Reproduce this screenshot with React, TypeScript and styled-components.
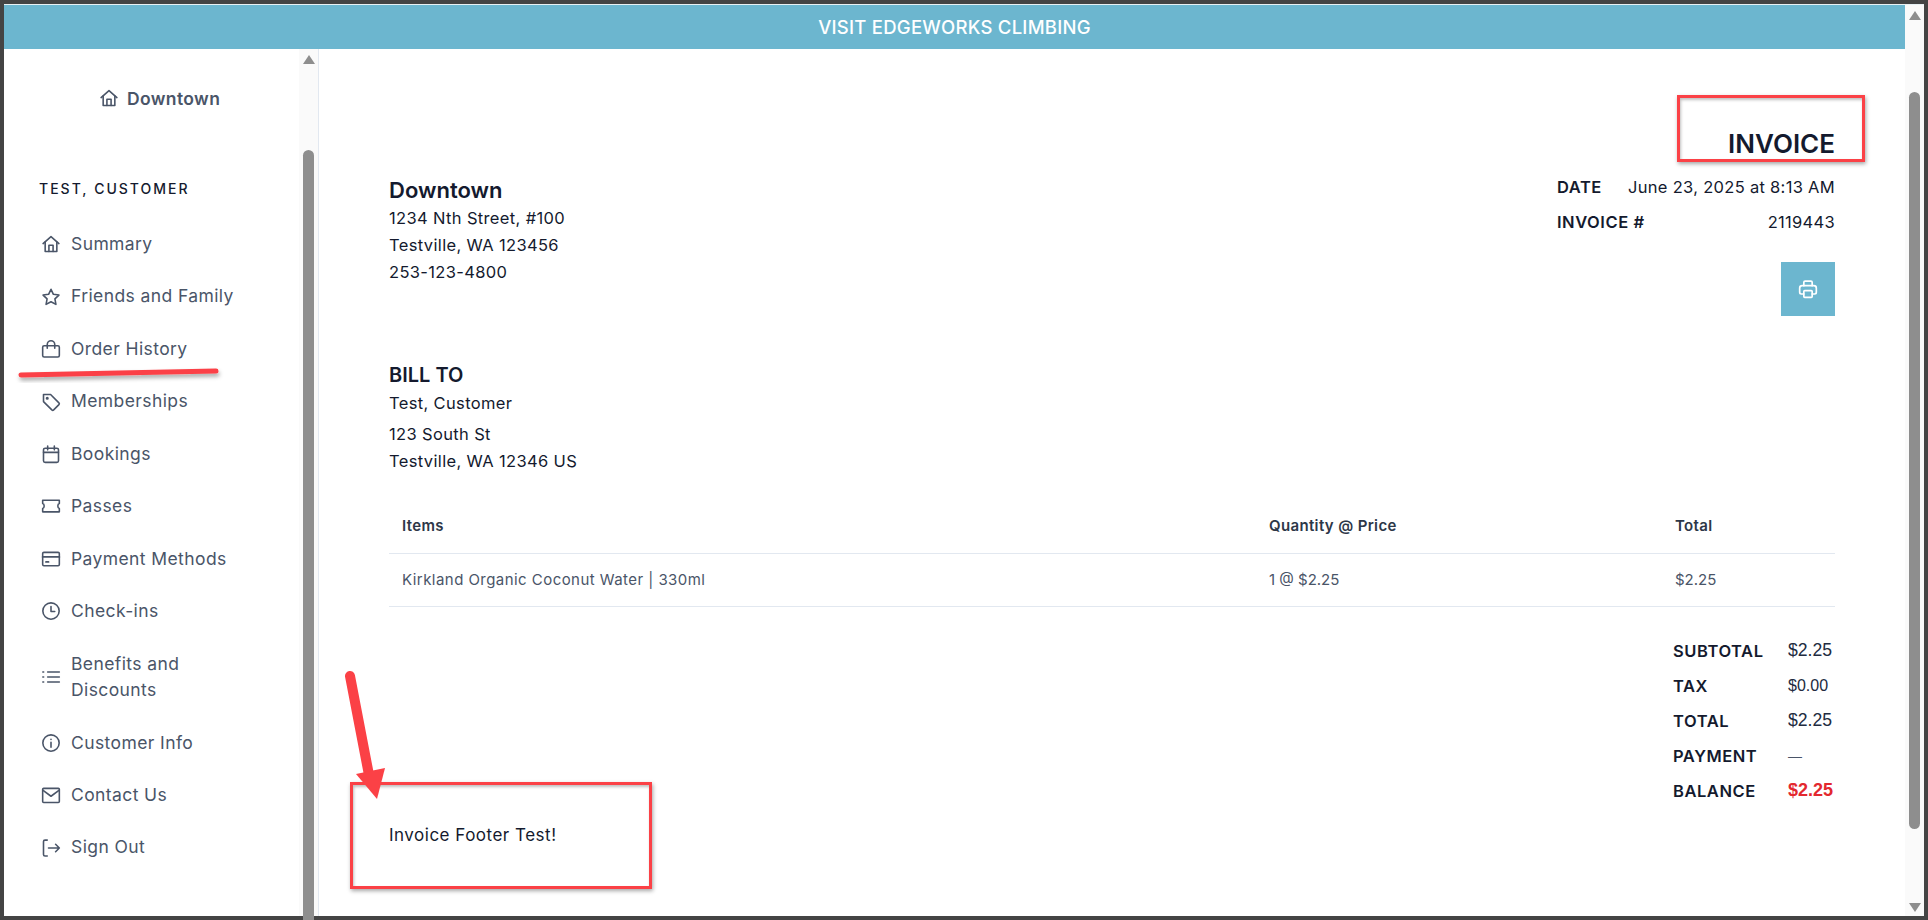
import React, { FC } from 'react'
import styled, { createGlobalStyle } from 'styled-components'

const BRAND = '#6cb6cf'
const INK = '#141a2e'
const SLATE = '#4a5568'
const RULE = '#e2e8f0'
const MARK = '#fb4146'
const FONT = `Inter, "Noto Sans", sans-serif`

const GlobalStyle = createGlobalStyle`
  html, body {
    margin: 0;
    padding: 0;
    background: #444;
    font-family: ${FONT};
  }
  * {
    box-sizing: border-box;
  }
`

const Page = styled.div`
  position: relative;
  width: 1928px;
  height: 920px;
  padding: 4px;
  overflow: hidden;
  background: #444;
`

const Window = styled.div`
  display: flex;
  height: 912px;
  border-top: 1px solid #e8f1f4;
  background: #fff;
`

const Content = styled.div`
  display: flex;
  flex: 1;
  flex-direction: column;
  min-width: 0;
`

const Banner = styled.div`
  display: flex;
  align-items: center;
  justify-content: center;
  height: 44px;
  color: #fff;
  background: ${BRAND};
  font-size: 18.5px;
  font-weight: 500;
  letter-spacing: 0.25px;
`

const Body = styled.div`
  display: flex;
  flex: 1;
  min-height: 0;
`

const Sidebar = styled.aside`
  display: flex;
  width: 315px;
  flex: none;
  border-right: 1px solid ${RULE};
`

const SideInner = styled.div`
  flex: 1;
  padding: 34px 0 0 37px;
  min-width: 0;
`

const Location = styled.div`
  display: flex;
  align-items: center;
  gap: 8px;
  height: 30px;
  padding-left: 58px;
  color: ${SLATE};
  font-size: 17.5px;
  font-weight: 600;
  letter-spacing: 0.38px;
`

const CustomerName = styled.div`
  margin: 63px 0 16px -2px;
  color: ${INK};
  font-size: 14px;
  font-weight: 500;
  line-height: 26px;
  letter-spacing: 2px;
`

const Nav = styled.nav`
  display: flex;
  flex-direction: column;
`

const NavItem = styled.a`
  display: flex;
  align-items: center;
  gap: 10px;
  padding: 13px 0;
  width: 215px;
  color: ${SLATE};
  font-size: 17.5px;
  line-height: 26.45px;
  letter-spacing: 0.4px;
`

const NavIcon = styled.svg`
  flex: none;
  width: 20px;
  height: 20px;
  fill: none;
  stroke: currentColor;
  stroke-width: 1.9;
  stroke-linecap: round;
  stroke-linejoin: round;
`

const ScrollTrack = styled.div`
  display: flex;
  flex: none;
  flex-direction: column;
  align-items: center;
  width: 19px;
  padding-top: 6px;
  background: #fafafa;
`

const ArrowUp = styled.div`
  flex: none;
  width: 0;
  height: 0;
  border-left: 6.5px solid transparent;
  border-right: 6.5px solid transparent;
  border-bottom: 9px solid #8e8e8e;
`

const ArrowDown = styled(ArrowUp)`
  margin-top: auto;
  margin-bottom: 4px;
  border-bottom: 0;
  border-top: 9px solid #8e8e8e;
`

const Thumb = styled.div<{ $top: number; $height: number }>`
  flex: none;
  width: 11px;
  height: ${p => p.$height}px;
  margin-top: ${p => p.$top}px;
  border-radius: 5.5px;
  background: #8e8e8e;
`

const SideThumb = styled(Thumb)`
  border-radius: 5.5px 5.5px 0 0;
`

const Main = styled.main`
  flex: 1;
  min-width: 0;
  padding: 80px 70px 0;
`

const InvoiceTitle = styled.h1`
  margin: 0;
  color: ${INK};
  font-size: 26px;
  font-weight: 600;
  line-height: 30px;
  text-align: right;
`

const HeadRow = styled.div`
  display: flex;
  justify-content: space-between;
`

const Parties = styled.div`
  padding-top: 16px;
`

const PartyName = styled.h2<{ $gap?: number; $size: number }>`
  margin: ${p => p.$gap ?? 0}px 0 0;
  color: ${INK};
  font-size: ${p => p.$size}px;
  font-weight: 600;
  line-height: 30px;
`

const AddressLine = styled.div<{ $gap?: number }>`
  margin-top: ${p => p.$gap ?? 0}px;
  color: ${INK};
  font-size: 16.5px;
  line-height: 27px;
  letter-spacing: 0.35px;
`

const Meta = styled.div`
  display: flex;
  flex-direction: column;
  width: 278px;
  padding-top: 10px;
`

const MetaRow = styled.div`
  display: flex;
  align-items: center;
  justify-content: space-between;
  height: 35px;
  color: ${INK};
  font-size: 16.5px;
  letter-spacing: 0.3px;
`

const Label = styled.span`
  color: ${INK};
  font-size: 16.5px;
  font-weight: 600;
  letter-spacing: 0.55px;
`

const PrintButton = styled.button`
  display: flex;
  align-items: center;
  justify-content: center;
  align-self: flex-end;
  width: 54px;
  height: 54px;
  margin-top: 23px;
  padding: 0;
  border: 0;
  color: #fff;
  background: ${BRAND};
`

const PrintIcon = styled(NavIcon)`
  stroke-width: 2;
`

const ItemsTable = styled.div`
  margin-top: 22px;
`

const TableRow = styled.div<{ $height: number }>`
  display: grid;
  grid-template-columns: 867px 406px 173px;
  align-items: center;
  height: ${p => p.$height}px;
  border-bottom: 1px solid ${RULE};
`

const HeadCell = styled.div`
  padding-left: 13px;
  color: #2d3748;
  font-size: 15px;
  font-weight: 600;
  letter-spacing: 0.35px;
`

const BodyCell = styled.div<{ $tight?: boolean }>`
  padding: 0 0 1px 13px;
  color: ${SLATE};
  font-size: 15px;
  letter-spacing: ${p => (p.$tight ? 0 : 0.45)}px;
`

const Totals = styled.div`
  display: flex;
  flex-direction: column;
  align-items: flex-end;
  margin-top: 26px;
`

const TotalRow = styled.div`
  display: grid;
  grid-template-columns: 115px 47px;
  align-items: center;
  height: 35px;
`

const TotalValue = styled.span<{ $size?: number; $alert?: boolean; $muted?: boolean }>`
  color: ${p => (p.$alert ? '#e3282f' : p.$muted ? SLATE : '#222b40')};
  font-family: "Liberation Sans", Arial, sans-serif;
  font-size: ${p => p.$size ?? 17.6}px;
  font-weight: ${p => (p.$alert ? 700 : 400)};
  white-space: nowrap;
`

const FooterNote = styled.div`
  margin-top: 14px;
  color: ${INK};
  font-size: 17px;
  line-height: 27px;
  letter-spacing: 0.5px;
`

const Callout = styled.div<{ $x: number; $y: number; $w: number; $h: number }>`
  position: absolute;
  left: ${p => p.$x}px;
  top: ${p => p.$y}px;
  width: ${p => p.$w}px;
  height: ${p => p.$h}px;
  border: 3px solid ${MARK};
  box-shadow: 1px 2px 4px rgba(0, 0, 0, 0.35), inset 1px 2px 3px rgba(0, 0, 0, 0.25);
  pointer-events: none;
`

const Overlay = styled.svg`
  position: absolute;
  left: 0;
  top: 0;
  width: 1928px;
  height: 920px;
  pointer-events: none;
`

const icons: Record<string, React.ReactNode> = {
  home: (
    <>
      <path d="M2.5 11.5 12 3.2l9.5 8.3" />
      <path d="M5 9.5V21h14V9.5" />
      <path d="M9.5 21v-7.5h5V21" />
    </>
  ),
  star: <path d="m12 2.8 2.9 6 6.6.9-4.8 4.6 1.2 6.6-5.9-3.2-5.9 3.2 1.2-6.6-4.8-4.6 6.6-.9z" />,
  bag: (
    <>
      <rect x="2" y="8" width="20" height="13.5" rx="1.8" />
      <path d="M7.5 11V6.5a4.5 4.5 0 0 1 9 0V11" />
    </>
  ),
  tag: (
    <>
      <path d="M3 3h8.5l10 10a1.6 1.6 0 0 1 0 2.2l-6.3 6.3a1.6 1.6 0 0 1-2.2 0L3 11.5z" />
      <circle cx="7.5" cy="7.5" r=".9" />
    </>
  ),
  calendar: (
    <>
      <rect x="3" y="5" width="18" height="17" rx="2" />
      <path d="M3 10h18M8 2.5V7M16 2.5V7" />
    </>
  ),
  ticket: <path d="M2 5h20v4c-2.4.6-2.4 5.4 0 6v4H2v-4c2.4-.6 2.4-5.4 0-6z" />,
  card: (
    <>
      <rect x="2" y="4" width="20" height="16" rx="1.5" />
      <path d="M2 9.5h20M6 15.5h3" strokeWidth="2.2" />
    </>
  ),
  clock: (
    <>
      <circle cx="12" cy="12" r="9.8" />
      <path d="M12 6.5V12.5h4.5" />
    </>
  ),
  list: <path d="M8 6h14M8 12h14M8 18h14M2.2 6h1M2.2 12h1M2.2 18h1" />,
  info: (
    <>
      <circle cx="12" cy="12" r="9.8" />
      <path d="M12 11v6M12 7.4v.4" />
    </>
  ),
  mail: (
    <>
      <rect x="2" y="4" width="20" height="17" rx="1.2" />
      <path d="m2.5 6.5 9.5 7 9.5-7" />
    </>
  ),
  signout: (
    <>
      <path d="M7.5 2.5H4.8A1.8 1.8 0 0 0 3 4.3v15.4a1.8 1.8 0 0 0 1.8 1.8h2.700" />
      <path d="M9 12h13M17.5 7.5 22 12l-4.5 4.5" />
    </>
  ),
}

const Icon: FC<{ name: string }> = ({ name }) => (
  <NavIcon viewBox="0 0 24 24">{icons[name]}</NavIcon>
)

const navItems = [
  { icon: 'home', label: 'Summary' },
  { icon: 'star', label: 'Friends and Family' },
  { icon: 'bag', label: 'Order History' },
  { icon: 'tag', label: 'Memberships' },
  { icon: 'calendar', label: 'Bookings' },
  { icon: 'ticket', label: 'Passes' },
  { icon: 'card', label: 'Payment Methods' },
  { icon: 'clock', label: 'Check-ins' },
  { icon: 'list', label: 'Benefits and Discounts' },
  { icon: 'info', label: 'Customer Info' },
  { icon: 'mail', label: 'Contact Us' },
  { icon: 'signout', label: 'Sign Out' },
]

const App: FC = () => {
  return (
    <Page>
      <GlobalStyle />
      <Window>
        <Content>
          <Banner>VISIT EDGEWORKS CLIMBING</Banner>
          <Body>
            <Sidebar>
              <SideInner>
                <Location>
                  <Icon name="home" />
                  Downtown
                </Location>
                <CustomerName>TEST, CUSTOMER</CustomerName>
                <Nav>
                  {navItems.map(item => (
                    <NavItem key={item.label}>
                      <Icon name={item.icon} />
                      <span>{item.label}</span>
                    </NavItem>
                  ))}
                </Nav>
              </SideInner>
              <ScrollTrack>
                <ArrowUp />
                <SideThumb $top={86} $height={780} />
              </ScrollTrack>
            </Sidebar>
            <Main>
              <InvoiceTitle>INVOICE</InvoiceTitle>
              <HeadRow>
                <Parties>
                  <PartyName $size={22}>Downtown</PartyName>
                  <AddressLine>1234 Nth Street, #100</AddressLine>
                  <AddressLine>Testville, WA 123456</AddressLine>
                  <AddressLine>253-123-4800</AddressLine>
                  <PartyName $size={20} $gap={74}>BILL TO</PartyName>
                  <AddressLine>Test, Customer</AddressLine>
                  <AddressLine $gap={4}>123 South St</AddressLine>
                  <AddressLine>Testville, WA 12346 US</AddressLine>
                </Parties>
                <Meta>
                  <MetaRow>
                    <Label>DATE</Label>
                    <span>June 23, 2025 at 8:13 AM</span>
                  </MetaRow>
                  <MetaRow>
                    <Label>INVOICE #</Label>
                    <span>2119443</span>
                  </MetaRow>
                  <PrintButton aria-label="Print">
                    <PrintIcon viewBox="0 0 24 24">
                      <path d="M7 8V4a1.5 1.5 0 0 1 1.5-1.5h7A1.5 1.5 0 0 1 17 4v4" />
                      <path d="M7 18H4a2 2 0 0 1-2-2v-5a3 3 0 0 1 3-3h14a3 3 0 0 1 3 3v5a2 2 0 0 1-2 2h-3" />
                      <rect x="7" y="14" width="10" height="8" rx="1" />
                    </PrintIcon>
                  </PrintButton>
                </Meta>
              </HeadRow>
              <ItemsTable>
                <TableRow $height={57}>
                  <HeadCell>Items</HeadCell>
                  <HeadCell>Quantity @ Price</HeadCell>
                  <HeadCell>Total</HeadCell>
                </TableRow>
                <TableRow $height={53}>
                  <BodyCell>Kirkland Organic Coconut Water | 330ml</BodyCell>
                  <BodyCell $tight>1 @ $2.25</BodyCell>
                  <BodyCell $tight>$2.25</BodyCell>
                </TableRow>
              </ItemsTable>
              <Totals>
                <TotalRow>
                  <Label>SUBTOTAL</Label>
                  <TotalValue>$2.25</TotalValue>
                </TotalRow>
                <TotalRow>
                  <Label>TAX</Label>
                  <TotalValue $size={16}>$0.00</TotalValue>
                </TotalRow>
                <TotalRow>
                  <Label>TOTAL</Label>
                  <TotalValue>$2.25</TotalValue>
                </TotalRow>
                <TotalRow>
                  <Label>PAYMENT</Label>
                  <TotalValue $size={14} $muted>—</TotalValue>
                </TotalRow>
                <TotalRow>
                  <Label>BALANCE</Label>
                  <TotalValue $size={18} $alert>$2.25</TotalValue>
                </TotalRow>
              </Totals>
              <FooterNote>Invoice Footer Test!</FooterNote>
            </Main>
          </Body>
        </Content>
        <ScrollTrack>
          <ArrowUp />
          <Thumb $top={72} $height={737} />
          <ArrowDown />
        </ScrollTrack>
      </Window>
      <Callout $x={1677} $y={95} $w={188} $h={67} />
      <Callout $x={350} $y={782} $w={302} $h={107} />
      <Overlay viewBox="0 0 1928 920">
        <defs>
          <filter id="markShadow" x="-20%" y="-200%" width="140%" height="500%">
            <feDropShadow dx="1" dy="3" stdDeviation="2" floodColor="#000" floodOpacity="0.35" />
          </filter>
        </defs>
        <g filter="url(#markShadow)">
          <path d="M21 375 L216 371" stroke={MARK} strokeWidth="5" strokeLinecap="round" fill="none" />
        </g>
        <path d="M350 676 L369 775" stroke={MARK} strokeWidth="10" strokeLinecap="round" fill="none" />
        <path d="M356 774 L385 768 L377 799 Z" fill={MARK} />
      </Overlay>
    </Page>
  )
}

export default App
